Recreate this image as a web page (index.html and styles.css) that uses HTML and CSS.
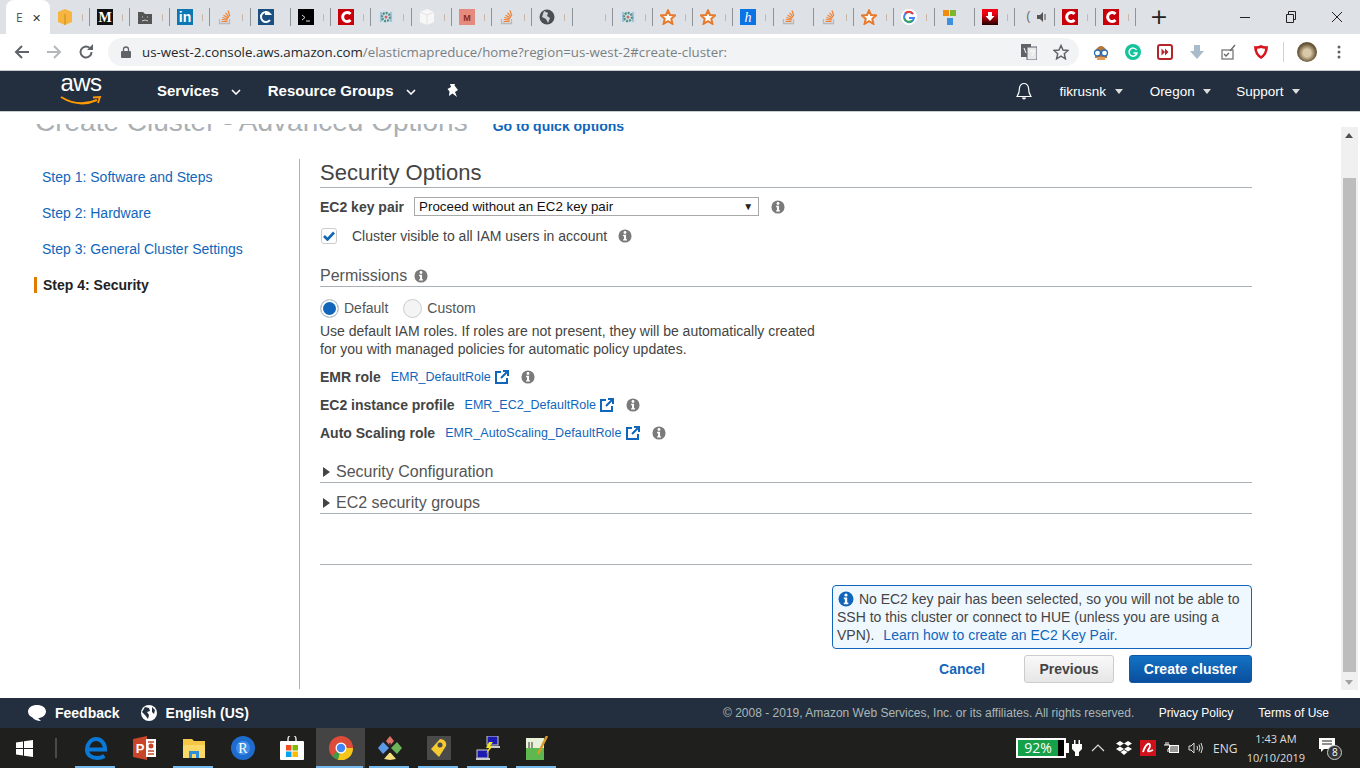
FILE: index.html
```html
<!DOCTYPE html>
<html lang="en">
<head>
  <meta charset="UTF-8">
  <title>Create Cluster - Advanced Options</title>
  <link rel="stylesheet" href="styles.css">
</head>
<body>
  <svg class="defs" width="0" height="0">
    <symbol id="info" viewBox="0 0 16 16"><circle cx="8" cy="8" r="7.5" fill="currentColor"/><circle cx="8" cy="4" r="1.6" fill="#fff"/><path d="M5.8 6.6h3.4v5h1.1v1.6H5.8v-1.6h1.1V8.2H5.8z" fill="#fff"/></symbol>
    <symbol id="ext" viewBox="0 0 14 14"><path d="M6 2H1v11h11V8" fill="none" stroke="#1166bb" stroke-width="2"/><path d="M8 1h5v5M13 1L6 8" fill="none" stroke="#1166bb" stroke-width="2"/></symbol>
    <symbol id="so" viewBox="0 0 16 16"><path d="M2.5 10v4.500h10V10" fill="none" stroke="#b9b9b9" stroke-width="1.300"/><path d="M4.500 12.500h6M4.700 10.500l5.800.6M5.300 8.500l5.600 1.500M6.500 6.200l5 2.800M8.500 3.800l3.600 4.300M11 1.500l1.800 5.500" fill="none" stroke="#ef8236" stroke-width="1.200"/></symbol>
    <symbol id="star" viewBox="0 0 16 16"><path d="M8 1.500l2 4.500 5 .5-3.700 3.300 1.100 5L8 12.200 3.600 14.800l1.100-5L1 6.500 6 6z" fill="#fff" stroke="#e8792b" stroke-width="2"/></symbol>
    <symbol id="redc" viewBox="0 0 16 16"><rect width="16" height="16" fill="#c8000a"/><path d="M12.500 5a4.500 4.500 0 1 0 0 6" fill="none" stroke="#fff" stroke-width="3"/></symbol>
    <symbol id="doc" viewBox="0 0 16 16"><rect y="2" width="16" height="12" fill="#d5e2ec"/><circle cx="8" cy="8" r="4" fill="none" stroke="#4d8f80" stroke-width="2.400" stroke-dasharray="2 1"/><circle cx="8" cy="8" r="1.500" fill="#c66"/><path d="M3 3v10M13 3v10" stroke="#7aa0c0"/></symbol>
    <symbol id="chev" viewBox="0 0 10 6"><path d="M1 1l4 4 4-4" fill="none" stroke="currentColor" stroke-width="1.600"/></symbol>
    <symbol id="caret" viewBox="0 0 8 5"><path d="M0 0h8L4 5z" fill="currentColor"/></symbol>
  </svg>

  <header class="tabstrip">
    <div class="tab-active"><span class="tab-letter">E</span><span class="tab-close">✕</span></div>
    <div class="tab"><svg class="fav" viewBox="0 0 16 16"><path d="M8 0l7 3v10l-7 3-7-3V3z" fill="#f5b53f"/><path d="M8 5v11" stroke="#c98a1c"/></svg><i class="tab-tail"></i></div>
    <div class="tab"><svg class="fav" viewBox="0 0 16 16"><rect width="16" height="16" fill="#111"/><text x="8" y="13" class="fav-m">M</text></svg><i class="tab-tail"></i></div>
    <div class="tab"><svg class="fav" viewBox="0 0 16 16"><path d="M1 3h5l2 2h7v10H1z" fill="#555"/><path d="M5 8h1M10 8h1M5 12q3-2 6 0" stroke="#ccc" fill="none"/></svg><i class="tab-tail"></i></div>
    <div class="tab"><svg class="fav" viewBox="0 0 16 16"><rect width="16" height="16" fill="#0a78b5"/><text x="8" y="13" class="fav-in">in</text></svg><i class="tab-tail"></i></div>
    <div class="tab"><svg class="fav"><use href="#so"/></svg><i class="tab-tail"></i></div>
    <div class="tab"><svg class="fav" viewBox="0 0 16 16"><rect width="16" height="16" fill="#1b4f82"/><path d="M12 11a5 5 0 1 1 0-6H7" fill="none" stroke="#fff" stroke-width="2"/></svg></div>
    <div class="tab"><svg class="fav" viewBox="0 0 16 16"><rect width="16" height="16" fill="#000"/><path d="M4 6l3 2.500-3 2.500M8 12h4" stroke="#ddd" fill="none"/></svg><i class="tab-tail"></i></div>
    <div class="tab"><svg class="fav"><use href="#redc"/></svg><i class="tab-tail"></i></div>
    <div class="tab"><svg class="fav"><use href="#doc"/></svg><i class="tab-tail"></i></div>
    <div class="tab"><svg class="fav" viewBox="0 0 16 16"><path d="M8 0l7 3v10l-7 3-7-3V3z" fill="#f7f7f7"/><path d="M1 3l7 3 7-3M8 6v10" stroke="#e4e4e4" fill="none"/></svg><i class="tab-tail"></i></div>
    <div class="tab"><svg class="fav" viewBox="0 0 16 16"><rect width="16" height="16" fill="#e58a7d"/><text x="8" y="12" class="fav-sm">M</text></svg><i class="tab-tail"></i></div>
    <div class="tab"><svg class="fav"><use href="#so"/></svg><i class="tab-tail"></i></div>
    <div class="tab"><svg class="fav" viewBox="0 0 16 16"><circle cx="8" cy="8" r="7.500" fill="#4a4f55"/><path d="M5 2l4 2-1 3 3 2-2 5-2-4-4-2z" fill="#cfd3d6"/></svg><i class="tab-tail"></i></div>
    <div class="tab"><span class="fav"></span><i class="tab-tail"></i></div>
    <div class="tab"><svg class="fav"><use href="#doc"/></svg><i class="tab-tail"></i></div>
    <div class="tab"><svg class="fav"><use href="#star"/></svg><i class="tab-tail"></i></div>
    <div class="tab"><svg class="fav"><use href="#star"/></svg><i class="tab-tail"></i></div>
    <div class="tab"><svg class="fav" viewBox="0 0 16 16"><rect width="16" height="16" fill="#0b74e5"/><text x="8" y="13" class="fav-h">h</text></svg><i class="tab-tail"></i></div>
    <div class="tab"><svg class="fav"><use href="#so"/></svg></div>
    <div class="tab"><svg class="fav"><use href="#so"/></svg><i class="tab-tail"></i></div>
    <div class="tab"><svg class="fav"><use href="#star"/></svg><i class="tab-tail"></i></div>
    <div class="tab"><svg class="fav" viewBox="0 0 16 16"><circle cx="8" cy="8" r="8" fill="#fff"/><path d="M12 5a5 5 0 1 0 1 4H8" fill="none" stroke="#4285f4" stroke-width="2"/><path d="M4 4.500A5 5 0 0 1 12 5" fill="none" stroke="#ea4335" stroke-width="2"/><path d="M3.200 9.500a5 5 0 0 0 8 2" fill="none" stroke="#34a853" stroke-width="2"/></svg><i class="tab-tail"></i></div>
    <div class="tab"><svg class="fav" viewBox="0 0 16 16"><rect x="1" y="1" width="6" height="6" fill="#f28c0f"/><rect x="8" y="1" width="6" height="6" fill="#7cb82f"/><rect x="5" y="9" width="6" height="7" fill="#3d8fe0"/></svg></div>
    <div class="tab"><svg class="fav" viewBox="0 0 16 16"><defs><linearGradient id="redfade" x1="0" y1="0" x2="0" y2="1"><stop offset="0.300" stop-color="#f00010"/><stop offset="1" stop-color="#200"/></linearGradient></defs><rect width="16" height="16" fill="url(#redfade)"/><path d="M6 3h4v4h2.500L8 12 3.500 7H6z" fill="#fff"/></svg><i class="tab-tail"></i></div>
    <div class="tab"><span class="fav fav-paren">(</span><svg class="fav-speaker" viewBox="0 0 10 12"><path d="M0 4h3l3-3v10L3 8H0z" fill="#555"/><path d="M8 3v6" stroke="#777" stroke-width="1.500"/></svg></div>
    <div class="tab"><svg class="fav"><use href="#redc"/></svg><i class="tab-tail"></i></div>
    <div class="tab"><svg class="fav"><use href="#redc"/></svg><i class="tab-tail"></i></div>
    <span class="new-tab">+</span>
    <div class="win-controls">
      <svg width="12" height="12" viewBox="0 0 12 12"><path d="M1 6.500h10" stroke="#222"/></svg>
      <svg width="12" height="12" viewBox="0 0 12 12"><path d="M1.500 3.500h7v8h-7zM3.500 3V.5h7v8H9" fill="none" stroke="#222"/></svg>
      <svg width="12" height="12" viewBox="0 0 12 12"><path d="M1 1l10 10M11 1L1 11" stroke="#222"/></svg>
    </div>
  </header>

  <div class="toolbar">
    <svg class="tool-ico" viewBox="0 0 16 16"><path d="M15 8H2M8 2L2 8l6 6" fill="none" stroke="#5f6368" stroke-width="2"/></svg>
    <svg class="tool-ico tool-forward" viewBox="0 0 16 16"><path d="M1 8h13M8 2l6 6-6 6" fill="none" stroke="#b5b8bb" stroke-width="2"/></svg>
    <svg class="tool-ico tool-reload" viewBox="0 0 16 16"><path d="M13.500 8A5.500 5.500 0 1 1 11.500 3.800" fill="none" stroke="#5f6368" stroke-width="2"/><path d="M9 6h6V0z" fill="#5f6368"/></svg>
    <div class="omnibox">
      <svg class="lock" viewBox="0 0 10 12"><path d="M2.500 5V3.500a2.500 2.500 0 0 1 5 0V5" fill="none" stroke="#5f6368" stroke-width="1.300"/><rect y="5" width="10" height="7" rx="1" fill="#5f6368"/></svg>
      <span class="url"><span class="url-host">us-west-2.console.aws.amazon.com</span>/elasticmapreduce/home?region=us-west-2#create-cluster:</span>
      <svg class="translate" viewBox="0 0 16 16"><rect width="10" height="13" fill="#5f6368"/><rect x="6" y="3" width="10" height="13" fill="#e6e8ea" stroke="#5f6368"/><path d="M3 4l2 5M9 7h5M11 12l2-4" stroke="#fff" fill="none"/></svg>
      <svg class="omni-star" viewBox="0 0 16 16"><path d="M8 1.500l2 4.500 5 .5-3.700 3.300 1.100 5L8 12.200 3.600 14.800l1.100-5L1 6.500 6 6z" fill="none" stroke="#5f6368" stroke-width="1.500"/></svg>
    </div>
    <div class="extensions">
      <svg viewBox="0 0 16 16"><path d="M2 7q6-10 12 0v7H2z" fill="#b5763a"/><circle cx="4.500" cy="9" r="3" fill="#fff" stroke="#2a6fb5" stroke-width="1.300"/><circle cx="11.500" cy="9" r="3" fill="#fff" stroke="#2a6fb5" stroke-width="1.300"/><path d="M4 13h8v3H4z" fill="#e99a55"/></svg>
      <svg viewBox="0 0 16 16"><circle cx="8" cy="8" r="8" fill="#15c39a"/><path d="M11.500 6a4 4 0 1 0 .5 3H8.500" fill="none" stroke="#fff" stroke-width="1.500"/></svg>
      <svg viewBox="0 0 16 16"><rect x="1" y="1" width="14" height="14" rx="2" fill="#fff" stroke="#b2252b" stroke-width="2"/><path d="M4.500 4.500L8 8l-3.500 3.500zM8 4.500L11.500 8 8 11.500z" fill="#b2252b"/></svg>
      <svg viewBox="0 0 16 16"><path d="M5 1h6v6h4l-7 8-7-8h4z" fill="#a9bccb"/></svg>
      <svg viewBox="0 0 16 16"><rect x="1" y="6" width="11" height="9" fill="none" stroke="#777" stroke-width="1.300"/><path d="M3 10l2 2 3-3M9 7l5-6" fill="none" stroke="#666" stroke-width="1.300"/></svg>
      <svg viewBox="0 0 16 16"><path d="M8 1q4 2 7 1 0 9-7 13Q1 11 1 2q3 1 7-1z" fill="#d8141f"/><path d="M8 4q2 1 4 .8Q12 9 8 12 4 9 4 4.800 6 5 8 4z" fill="#fff"/></svg>
    </div>
    <i class="tool-sep"></i>
    <span class="avatar"></span>
    <svg class="dots" viewBox="0 0 4 16"><circle cx="2" cy="3" r="1.500" fill="#5f6368"/><circle cx="2" cy="8" r="1.500" fill="#5f6368"/><circle cx="2" cy="13" r="1.500" fill="#5f6368"/></svg>
  </div>

  <nav class="aws-nav">
    <div class="aws-logo">
      <span class="aws-word">aws</span>
      <svg class="aws-smile" viewBox="0 0 42 10"><path d="M1 1q18 11 36 3" fill="none" stroke="#f90" stroke-width="2"/><path d="M33 1.500l7-.5-2 6" fill="none" stroke="#f90" stroke-width="1.800"/></svg>
    </div>
    <a class="nav-main nav-services">Services</a><svg class="nav-chev"><use href="#chev"/></svg>
    <a class="nav-main nav-groups">Resource Groups</a><svg class="nav-chev"><use href="#chev"/></svg>
    <svg class="nav-pin" viewBox="0 0 14 14"><path d="M4 0h5l-.5 1.500L12 6 9 8l2 5-4.500-3.500L3 12l.5-4.500L1.500 5 5 3z" fill="#fff"/></svg>
    <svg class="nav-bell" viewBox="0 0 16 18"><path d="M8 1.500a4.500 4.500 0 0 0-4.500 4.500c0 5-1.500 7-2.500 8.500h14c-1-1.500-2.500-3.500-2.500-8.500A4.500 4.500 0 0 0 8 1.500z" fill="none" stroke="#fff" stroke-width="1.200"/><path d="M6 15.500a2 2 0 0 0 4 0z" fill="#fff"/></svg>
    <a class="nav-user">fikrusnk</a><svg class="nav-caret"><use href="#caret"/></svg>
    <a class="nav-user nav-oregon">Oregon</a><svg class="nav-caret"><use href="#caret"/></svg>
    <a class="nav-user nav-support">Support</a><svg class="nav-caret"><use href="#caret"/></svg>
  </nav>

  <div class="console">
    <div class="console-body">
      <div class="page-head">
        <span class="page-title">Create Cluster - Advanced Options</span>
        <a class="quick-link">Go to quick options</a>
      </div>
      <div class="wizard">
        <aside class="steps">
          <a class="step">Step 1: Software and Steps</a>
          <a class="step">Step 2: Hardware</a>
          <a class="step">Step 3: General Cluster Settings</a>
          <a class="step step-current">Step 4: Security</a>
        </aside>
        <main class="panel">
          <h2 class="panel-title">Security Options</h2>
          <div class="key-row">
            <label class="field-label">EC2 key pair</label>
            <div class="fake-select">Proceed without an EC2 key pair<span class="select-arrow">▼</span></div>
            <svg class="info info-key"><use href="#info"/></svg>
          </div>
          <div class="check-row">
            <span class="checkbox"><svg viewBox="0 0 12 10" width="12" height="10"><path d="M1 5l3.500 3.500L11 1.500" fill="none" stroke="#1166bb" stroke-width="2.600"/></svg></span>
            <span>Cluster visible to all IAM users in account</span>
            <svg class="info info-check"><use href="#info"/></svg>
          </div>
          <h3 class="sub-title">Permissions <svg class="info info-perm"><use href="#info"/></svg></h3>
          <div class="radio-row">
            <span class="radio radio-on"></span><span class="radio-text">Default</span>
            <span class="radio radio-custom"></span><span class="radio-text">Custom</span>
          </div>
          <p class="roles-note">Use default IAM roles. If roles are not present, they will be automatically created<br>for you with managed policies for automatic policy updates.</p>
          <div class="role-row role-first"><b class="field-label">EMR role</b><a class="role-link">EMR_DefaultRole</a><svg class="ext"><use href="#ext"/></svg><svg class="info info-role"><use href="#info"/></svg></div>
          <div class="role-row"><b class="field-label">EC2 instance profile</b><a class="role-link">EMR_EC2_DefaultRole</a><svg class="ext"><use href="#ext"/></svg><svg class="info info-role"><use href="#info"/></svg></div>
          <div class="role-row"><b class="field-label">Auto Scaling role</b><a class="role-link role-link-wide">EMR_AutoScaling_DefaultRole</a><svg class="ext"><use href="#ext"/></svg><svg class="info info-role"><use href="#info"/></svg></div>
          <div class="fold fold-first"><i class="fold-arrow"></i>Security Configuration</div>
          <div class="fold"><i class="fold-arrow"></i>EC2 security groups</div>
          <hr class="divider">
          <div class="notice">
            <div class="notice-top"><svg class="notice-ico"><use href="#info"/></svg> No EC2 key pair has been selected, so you will not be able to SSH to this cluster or connect to HUE (unless you are using a</div>
            <div class="notice-end"><span>VPN).</span><a class="notice-link">Learn how to create an EC2 Key Pair.</a></div>
          </div>
          <div class="actions">
            <a class="btn-cancel">Cancel</a>
            <button class="btn-prev">Previous</button>
            <button class="btn-create">Create cluster</button>
          </div>
        </main>
      </div>
    </div>
    <div class="scrollbar">
      <i class="scroll-up"></i>
      <i class="scroll-thumb"></i>
      <i class="scroll-down"></i>
    </div>
  </div>

  <footer class="aws-footer">
    <svg class="foot-ico foot-bubble" viewBox="0 0 18 16"><path d="M9 0c5 0 9 2.700 9 6.500S14 13 10 13l3 3c-4 0-7-1.500-8.500-3.500C2 11.500 0 9.500 0 6.500 0 2.700 4 0 9 0z" fill="#fff"/></svg>
    <b class="foot-strong">Feedback</b>
    <svg class="foot-ico foot-globe" viewBox="0 0 16 16"><circle cx="8" cy="8" r="8" fill="#fff"/><path d="M4 2l4 1 1 3-3 1 2 3-1 4-3-4-3-3zM11 2l3 3-1 4-2-2z" fill="#232f3e"/></svg>
    <b class="foot-strong">English (US)</b>
    <span class="copyright">© 2008 - 2019, Amazon Web Services, Inc. or its affiliates. All rights reserved.</span>
    <a class="foot-link foot-privacy">Privacy Policy</a>
    <a class="foot-link foot-terms">Terms of Use</a>
  </footer>

  <div class="taskbar">
    <svg class="win-logo" viewBox="0 0 17 17"><path d="M0 2.500l7-1v6.500H0zM8 1.300L17 0v8H8zM0 9h7v6.500l-7-1zM8 9h9v8l-9-1.300z" fill="#fff"/></svg>
    <i class="task-sep"></i>
    <div class="task-app task-open"><svg viewBox="0 0 24 24"><path d="M4 13.500H21C21 7 17 3 12 3 7 3 3 8 3 13.500 3 19 7 22 13 22c3 0 5.500-.7 7.500-2" fill="none" stroke="#0a78d7" stroke-width="4"/></svg></div>
    <div class="task-app"><svg viewBox="0 0 24 24"><path d="M0 3l14-3v24L0 21z" fill="#c8452a"/><rect x="13" y="3" width="10" height="18" fill="#fff"/><path d="M15 6h6M15 15h6M15 18h6" stroke="#c8452a" stroke-width="1.500"/><circle cx="18" cy="10" r="2.500" fill="#c8452a"/><text x="7" y="17" class="ppt-p">P</text></svg></div>
    <div class="task-app task-open"><svg viewBox="0 0 24 24"><path d="M1 3h9l2 2h11v17H1z" fill="#f6c645"/><path d="M1 9h22v13H1z" fill="#fbd968"/><path d="M7 22v-7h10v7h-3v-4h-4v4z" fill="#2f8fd8"/></svg></div>
    <div class="task-app"><svg viewBox="0 0 24 24"><circle cx="12" cy="12" r="12" fill="#1f6ccf"/><circle cx="12" cy="12" r="7" fill="#3f8fe8"/><text x="12" y="17" class="r-letter">R</text></svg></div>
    <div class="task-app"><svg viewBox="0 0 24 24"><path d="M8 6V3a4 4 0 0 1 8 0v3" fill="none" stroke="#ddd" stroke-width="1.500"/><rect y="5" width="24" height="19" rx="1" fill="#fff"/><rect x="6" y="9" width="5.500" height="5.500" fill="#f25022"/><rect x="12.500" y="9" width="5.500" height="5.500" fill="#7fba00"/><rect x="6" y="15.500" width="5.500" height="5.500" fill="#00a4ef"/><rect x="12.500" y="15.500" width="5.500" height="5.500" fill="#ffb900"/></svg></div>
    <div class="task-app task-active"><svg viewBox="0 0 24 24"><circle cx="12" cy="12" r="12" fill="#dd4b39"/><path d="M12 12L22.400 18A12 12 0 0 1 3 20z" fill="#3f9a48"/><path d="M12 12L9 24A12 12 0 0 0 24 12z" fill="#f5c518"/><circle cx="12" cy="12" r="5.500" fill="#fff"/><circle cx="12" cy="12" r="4.200" fill="#4285f4"/></svg></div>
    <div class="task-app task-open"><svg viewBox="0 0 24 24"><path d="M12 16l6 7-6 1-6-1z" fill="#f6df7a"/><path d="M5 6L0 12l5 6 6-6z" fill="#5a9ae6"/><path d="M19 6l5 6-5 6-6-6z" fill="#6db35a"/><path d="M12 0l4 5-4 5-4-5z" fill="#e0706a"/><path d="M12 7v10" stroke="#222" stroke-width="1.500"/></svg></div>
    <div class="task-app task-open"><svg viewBox="0 0 24 24"><rect width="24" height="24" rx="1" fill="#4a4a4a"/><path d="M13 3c5 0 7 4 6 7l-7 11-8-8z" fill="#f5c92f"/><circle cx="13" cy="9" r="2.500" fill="#4a4a4a"/></svg></div>
    <div class="task-app task-open"><svg viewBox="0 0 24 24"><rect x="11" y="0" width="11" height="9" fill="#1b1bb3" stroke="#ccc"/><rect x="1" y="14" width="11" height="8" fill="#1b1bb3" stroke="#ccc"/><path d="M13 6l-3 6h3l-3 6 7-8h-3l3-4z" fill="#f5e32f"/><path d="M15 10h9v2h-9zM0 22h14v2H0z" fill="#ccc"/></svg></div>
    <div class="task-app task-open"><svg viewBox="0 0 24 24"><rect x="1" y="2" width="18" height="22" fill="#e8f2d8"/><rect x="1" y="12" width="18" height="12" fill="#5fb84f"/><path d="M4 6v6M7 6v6" stroke="#333"/><path d="M22 0L13 18" stroke="#d89b2a" stroke-width="2.500"/></svg></div>

    <div class="tray">
      <div class="battery"><span class="battery-fill">92%</span><i class="battery-cap"></i></div>
      <svg class="tray-plug" viewBox="0 0 10 16"><path d="M2 0h1.500v4H6.500V0H8v4h2v5l-3 3v4H3v-4L0 9V4h2z" fill="#fff"/></svg>
      <svg class="tray-up" viewBox="0 0 14 8"><path d="M1 7l6-6 6 6" fill="none" stroke="#ddd" stroke-width="1.200"/></svg>
      <svg class="tray-box" viewBox="0 0 16 14"><path d="M4 0l4 2.500L4 5 0 2.500zM12 0l4 2.500L12 5 8 2.500zM4 5.500L8 8l-4 2.500L0 8zM12 5.500L16 8l-4 2.500L8 8zM4.500 11L8 9l3.500 2L8 14z" fill="#fff"/></svg>
      <svg class="tray-avira" viewBox="0 0 16 16"><rect width="16" height="16" fill="#d0121c"/><path d="M3 12C6 3 10 2 10 6c0 3-3 4-2 5s3 0 5-1" fill="none" stroke="#fff" stroke-width="1.800"/></svg>
      <svg class="tray-batt" viewBox="0 0 16 12"><rect x="5.500" y="3.500" width="9" height="7" fill="#999" stroke="#fff"/><path d="M2 0v3M4 0v3M0 3h6v2l-2 2v3" stroke="#fff" fill="none"/></svg>
      <svg class="tray-vol" viewBox="0 0 16 12"><path d="M1 4h2l3-3v10L3 8H1z" fill="none" stroke="#ddd"/><path d="M9 4q1 2 0 4M11 2.500q2 3.500 0 7M13 1q3 5 0 10" fill="none" stroke="#ddd"/></svg>
      <span class="tray-lang">ENG</span>
      <div class="clock"><span>1:43 AM</span><span>10/10/2019</span></div>
      <div class="action-center">
        <svg viewBox="0 0 16 14" width="16" height="14"><path d="M0 0h16v11H5l-3 3v-3H0z" fill="#fff"/><path d="M3 3h10M3 6h10" stroke="#222"/></svg>
        <span class="action-badge">8</span>
      </div>
    </div>
  </div>
</body>
</html>
```

FILE: styles.css
```css
/* General Reset */
* {
  margin: 0;
  padding: 0;
  box-sizing: border-box;
}

html, body {
  width: 1360px;
  height: 768px;
  overflow: hidden;
}

body {
  font-family: "Liberation Sans", Arial, sans-serif;
  font-size: 14px;
  color: #444;
  background: #fff;
  display: flex;
  flex-direction: column;
}

i {
  display: block;
}

.defs {
  position: absolute;
}

/* Browser tabs */
.tabstrip {
  height: 34px;
  flex: none;
  background: #dee1e6;
  display: flex;
  padding-left: 6px;
}

.tab-active {
  width: 43.5px;
  height: 34px;
  background: #fff;
  border-radius: 8px 8px 0 0;
  display: flex;
  align-items: center;
  padding-left: 10px;
  font-family: "Open Sans", sans-serif;
  font-size: 12px;
  color: #555;
}

.tab-close {
  margin-left: 9px;
  font-size: 11px;
  color: #333;
}

.tab {
  width: 40.24px;
  height: 34px;
  flex: none;
  display: flex;
  align-items: center;
  padding-left: 7px;
  position: relative;
}

.tab::after {
  content: "";
  position: absolute;
  right: 0;
  top: 8px;
  width: 1px;
  height: 18px;
  background: #8f9499;
}

.fav {
  width: 16px;
  height: 16px;
  flex: none;
  display: block;
}

.fav-paren {
  width: 8px;
  margin-left: 4px;
  font-size: 12px;
  color: #666;
}

.fav-speaker {
  width: 10px;
  height: 12px;
  margin-left: 3px;
}

.tab-tail {
  width: 1px;
  height: 7px;
  margin-left: 9px;
  background: #c9b8a8;
}

.fav-m, .fav-in, .fav-h, .fav-sm {
  text-anchor: middle;
  font-weight: bold;
  fill: #fff;
}

.fav-m {
  font-family: "Liberation Serif", serif;
  font-size: 14px;
}

.fav-in {
  font-size: 14px;
}

.fav-h {
  font-family: "Liberation Serif", serif;
  font-style: italic;
  font-size: 14px;
  font-weight: normal;
}

.fav-sm {
  font-size: 9px;
  fill: #8c2a20;
}

.new-tab {
  margin-left: 14px;
  font-size: 22px;
  line-height: 33px;
  color: #222;
  font-family: "DejaVu Sans", sans-serif;
}

.win-controls {
  margin-left: auto;
  display: flex;
  align-items: center;
  gap: 34px;
  padding-right: 17px;
}

/* Address bar row */
.toolbar {
  height: 37px;
  flex: none;
  background: #fff;
  border-bottom: 1px solid #c8cacc;
  display: flex;
  align-items: center;
  padding-left: 14px;
}

.tool-ico {
  width: 16px;
  height: 16px;
  flex: none;
}

.tool-forward, .tool-reload {
  margin-left: 16px;
}

.omnibox {
  width: 971px;
  height: 28px;
  margin-left: 14px;
  border-radius: 14px;
  background: #f1f3f4;
  display: flex;
  align-items: center;
  padding-left: 13px;
}

.lock {
  width: 10px;
  height: 12px;
  flex: none;
}

.url {
  margin-left: 11px;
  font-family: "Open Sans", sans-serif;
  font-size: 13.27px;
  color: #7b7f83;
  white-space: nowrap;
}

.url-host {
  color: #24282c;
}

.translate {
  width: 16px;
  height: 16px;
  margin-left: auto;
}

.omni-star {
  width: 16px;
  height: 16px;
  margin: 0 10px 0 16px;
}

.extensions {
  display: flex;
  gap: 16px;
  margin-left: 14px;
}

.extensions svg {
  width: 16px;
  height: 16px;
}

.tool-sep {
  width: 1px;
  height: 20px;
  margin-left: 14px;
  background: #d0d2d4;
}

.avatar {
  width: 20px;
  height: 20px;
  margin-left: 13px;
  border-radius: 50%;
  background: radial-gradient(circle at 50% 55%, #d8c9a8 0 25%, #6d5a3a 60%, #3a3026);
}

.dots {
  width: 4px;
  height: 16px;
  margin-left: 20px;
}

/* AWS console nav */
.aws-nav {
  height: 41px;
  flex: none;
  background: #232f3e;
  border-bottom: 1px solid #c9cccf;
  display: flex;
  align-items: center;
  color: #fff;
  position: relative;
  z-index: 2;
}

.aws-logo {
  width: 42px;
  height: 30px;
  margin-left: 60px;
  position: relative;
  text-align: center;
}

.aws-word {
  font-size: 24px;
  line-height: 22px;
  display: block;
  margin-top: -4px;
  letter-spacing: -0.5px;
}

.aws-smile {
  position: absolute;
  left: 0;
  top: 20px;
  width: 42px;
  height: 10px;
}

.nav-main {
  margin-top: -2px;
  font-size: 15px;
  font-weight: bold;
}

.nav-services {
  margin-left: 55px;
}

.nav-groups {
  margin-left: 27px;
}

.nav-chev {
  width: 10px;
  height: 6px;
  margin: 2px 0 0 12px;
  color: #fff;
}

.nav-pin {
  width: 14px;
  height: 14px;
  margin-left: 30px;
}

.nav-bell {
  width: 16px;
  height: 18px;
  margin-left: 556px;
}

.nav-user {
  font-size: 13.5px;
  margin-left: 28px;
}

.nav-oregon {
  margin-left: 27px;
}

.nav-support {
  margin-left: 25px;
}

.nav-caret {
  width: 8px;
  height: 5px;
  margin-left: 8.5px;
  color: #ddd;
}

/* Scrolled console area */
.console {
  height: 586px;
  flex: none;
  overflow: hidden;
  display: flex;
  position: relative;
}

/* white strip under the nav that the page title scrolls beneath */
.console::before {
  content: "";
  position: absolute;
  left: 0;
  top: 0;
  width: 1341px;
  height: 12px;
  background: #fff;
  z-index: 1;
}

.console-body {
  width: 1341px;
  flex: none;
}

.page-head {
  display: flex;
  align-items: baseline;
  margin-top: -7px;
  padding-left: 35px;
  height: 54px;
}

.page-title {
  font-size: 28px;
  line-height: 34px;
  color: #aab0b4;
}

.quick-link {
  margin-left: 25px;
  font-weight: bold;
  color: #1166bb;
}

.wizard {
  display: flex;
}

.steps {
  width: 300px;
  height: 530px;
  flex: none;
  border-right: 1px solid #aab0b4;
  padding-top: 10px;
  display: flex;
  flex-direction: column;
  gap: 20px;
}

.step {
  margin-left: 42px;
  line-height: 16px;
  color: #1166bb;
}

.step-current {
  margin-left: 34px;
  padding-left: 6px;
  border-left: 3px solid #e07b00;
  font-weight: bold;
  color: #222;
}

.panel {
  width: 952px;
  padding-left: 20px;
}

.panel-title {
  font-size: 22px;
  font-weight: normal;
  line-height: 28px;
  color: #444;
  border-bottom: 1px solid #aab0b4;
}

.key-row {
  display: flex;
  align-items: center;
  height: 19px;
  margin-top: 9px;
}

.field-label {
  font-weight: bold;
  color: #444;
}

.fake-select {
  width: 345px;
  height: 19px;
  margin-left: 10px;
  border: 1px solid #a9a9a9;
  padding-left: 4px;
  font-size: 13.33px;
  line-height: 17px;
  color: #111;
  position: relative;
}

.select-arrow {
  position: absolute;
  right: 5px;
  top: 0;
  font-size: 10px;
  color: #222;
}

.info {
  width: 14px;
  height: 14px;
  flex: none;
  color: #7a7a7a;
}

.info-key {
  margin-left: 12px;
}

.check-row {
  display: flex;
  align-items: center;
  height: 16px;
  margin-top: 12px;
}

.checkbox {
  width: 16px;
  height: 16px;
  flex: none;
  margin-left: 1px;
  margin-right: 15px;
  border: 1px solid #ccc;
  border-radius: 3px;
  display: flex;
  align-items: center;
  justify-content: center;
}

.info-check {
  margin-left: 11px;
}

.sub-title {
  height: 21px;
  margin-top: 22px;
  font-size: 16px;
  font-weight: normal;
  line-height: 20px;
  color: #555;
  border-bottom: 1px solid #aab0b4;
}

.info-perm {
  vertical-align: -2px;
  margin-left: 2px;
}

.radio-row {
  display: flex;
  align-items: center;
  height: 20px;
  margin-top: 11px;
}

.radio {
  width: 19px;
  height: 19px;
  flex: none;
  border-radius: 50%;
  border: 1px solid #ccc;
  background: #f4f4f4;
}

.radio-on {
  background: #1166bb;
  box-shadow: inset 0 0 0 2px #fff;
}

.radio-custom {
  margin-left: 15px;
}

.radio-text {
  margin-left: 5px;
  color: #555;
}

.roles-note {
  margin-top: 4px;
  line-height: 18px;
  color: #444;
}

.role-row {
  display: flex;
  align-items: center;
  height: 20px;
  margin-top: 8px;
}

.role-first {
  margin-top: 9px;
}

.role-link {
  margin-left: 10px;
  font-size: 12.5px;
  color: #1166bb;
}

.role-link-wide {
  letter-spacing: 0.1px;
}

.ext {
  width: 14px;
  height: 14px;
  margin-left: 4px;
}

.info-role {
  margin-left: 12px;
}

.fold {
  height: 22px;
  margin-top: 9px;
  display: flex;
  align-items: center;
  padding-left: 3px;
  font-size: 16px;
  color: #555;
  border-bottom: 1px solid #aab0b4;
}

.fold-first {
  margin-top: 18px;
}

.fold-arrow {
  width: 0;
  height: 0;
  margin-right: 6px;
  border-left: 7px solid #444;
  border-top: 5px solid transparent;
  border-bottom: 5px solid transparent;
}

.divider {
  margin-top: 50px;
  border: none;
  border-top: 1px solid #aab0b4;
}

.notice {
  width: 420px;
  height: 64px;
  margin: 20px 0 0 auto;
  padding: 4px;
  border: 1px solid #1166bb;
  border-radius: 4px;
  background: #f0f8ff;
  line-height: 18px;
  color: #444;
}

.notice-ico {
  width: 16px;
  height: 16px;
  margin: 0 1px 0 1px;
  vertical-align: -3px;
  color: #1166bb;
}

.notice-link {
  margin-left: 9px;
  color: #1166bb;
}

.actions {
  display: flex;
  justify-content: flex-end;
  align-items: center;
  height: 28px;
  margin-top: 6px;
}

.btn-cancel {
  font-weight: bold;
  color: #1166bb;
}

.btn-prev, .btn-create {
  height: 28px;
  border-radius: 3px;
  font-family: inherit;
  font-size: 14px;
  font-weight: bold;
  cursor: pointer;
}

.btn-prev {
  width: 90px;
  margin-left: 39px;
  border: 1px solid #ccc;
  background: linear-gradient(#f9f9f9, #e6e6e6);
  color: #444;
}

.btn-create {
  width: 123px;
  margin-left: 15px;
  border: 1px solid #0e5aa8;
  background: linear-gradient(#1472c4, #0a4f9e);
  color: #fff;
}

.scrollbar {
  width: 17px;
  height: 563px;
  margin-top: 15px;
  background: #f0f0f0;
  position: relative;
}

.scroll-thumb {
  position: absolute;
  left: 2px;
  top: 51px;
  width: 13px;
  height: 494px;
  background: #bdbdbd;
}

.scroll-up, .scroll-down {
  position: absolute;
  left: 4px;
  width: 0;
  height: 0;
  border-left: 4.5px solid transparent;
  border-right: 4.5px solid transparent;
}

.scroll-up {
  top: 6px;
  border-bottom: 5px solid #505050;
}

.scroll-down {
  bottom: 5px;
  border-top: 5px solid #a3a3a3;
}

/* AWS console footer */
.aws-footer {
  height: 30px;
  flex: none;
  background: #232f3e;
  display: flex;
  align-items: center;
  color: #fff;
}

.foot-ico {
  flex: none;
}

.foot-bubble {
  width: 18px;
  height: 16px;
  margin-left: 28px;
}

.foot-globe {
  width: 16px;
  height: 16px;
  margin-left: 21px;
}

.foot-strong {
  margin-left: 9px;
}

.copyright {
  position: absolute;
  left: 723px;
  font-size: 12px;
  color: #aab7b8;
}

.foot-link {
  font-size: 12px;
  color: #fff;
}

.foot-privacy {
  margin-left: auto;
}

.foot-terms {
  margin-left: 25px;
  margin-right: 31px;
}

/* Windows taskbar */
.taskbar {
  height: 40px;
  flex: none;
  background: #1f1f1d;
  display: flex;
  align-items: center;
  color: #ddd;
  font-family: "Open Sans", sans-serif;
  font-size: 12px;
}

.win-logo {
  width: 17px;
  height: 17px;
  margin-left: 16px;
}

.task-sep {
  width: 2px;
  height: 20px;
  margin: 0 14px 0 22px;
  background: #4a4a48;
}

.task-app {
  width: 49px;
  height: 40px;
  flex: none;
  display: flex;
  align-items: center;
  justify-content: center;
  position: relative;
}

.task-app svg {
  width: 24px;
  height: 24px;
}

.task-open::after, .task-active::after {
  content: "";
  position: absolute;
  left: 4px;
  right: 5px;
  bottom: 0;
  height: 2px;
  background: #76b9ed;
}

.task-active {
  background: #444;
}

.task-active::after {
  left: 0;
  right: 2px;
}

.ppt-p {
  text-anchor: middle;
  font-family: "Liberation Sans", sans-serif;
  font-size: 13px;
  font-weight: bold;
  fill: #fff;
}

.r-letter {
  text-anchor: middle;
  font-family: "Liberation Serif", serif;
  font-size: 14px;
  fill: #fff;
}

.tray {
  position: absolute;
  left: 1016px;
  display: flex;
  align-items: center;
  height: 40px;
}

.battery {
  width: 50px;
  height: 20px;
  border: 2px solid #fff;
  background: #000;
  position: relative;
}

.battery-fill {
  display: block;
  width: 40px;
  height: 16px;
  background: #15a04a;
  color: #fff;
  font-size: 14px;
  line-height: 16px;
  text-align: center;
}

.battery-cap {
  position: absolute;
  right: -5px;
  top: 3px;
  width: 3px;
  height: 10px;
  background: #fff;
}

.tray-plug {
  width: 10px;
  height: 16px;
  margin-left: 6px;
}

.tray-up {
  width: 14px;
  height: 8px;
  margin-left: 9px;
}

.tray-box {
  width: 16px;
  height: 14px;
  margin-left: 11px;
}

.tray-avira {
  width: 16px;
  height: 16px;
  margin-left: 8px;
}

.tray-batt {
  width: 16px;
  height: 12px;
  margin-left: 8px;
}

.tray-vol {
  width: 16px;
  height: 12px;
  margin-left: 8px;
}

.tray-lang {
  margin-left: 9px;
}

.clock {
  width: 68px;
  margin-left: 4.5px;
  font-size: 11px;
  display: flex;
  flex-direction: column;
  align-items: center;
  line-height: 19px;
}

.action-center {
  width: 24px;
  height: 24px;
  margin-left: 9.5px;
  position: relative;
}

.action-center svg {
  position: absolute;
  left: 0;
  top: 2px;
}

.action-badge {
  position: absolute;
  left: 8px;
  top: 9px;
  width: 15px;
  height: 15px;
  border-radius: 50%;
  border: 1px solid #ccc;
  background: #333;
  color: #fff;
  font-size: 10px;
  line-height: 13px;
  text-align: center;
}
```
